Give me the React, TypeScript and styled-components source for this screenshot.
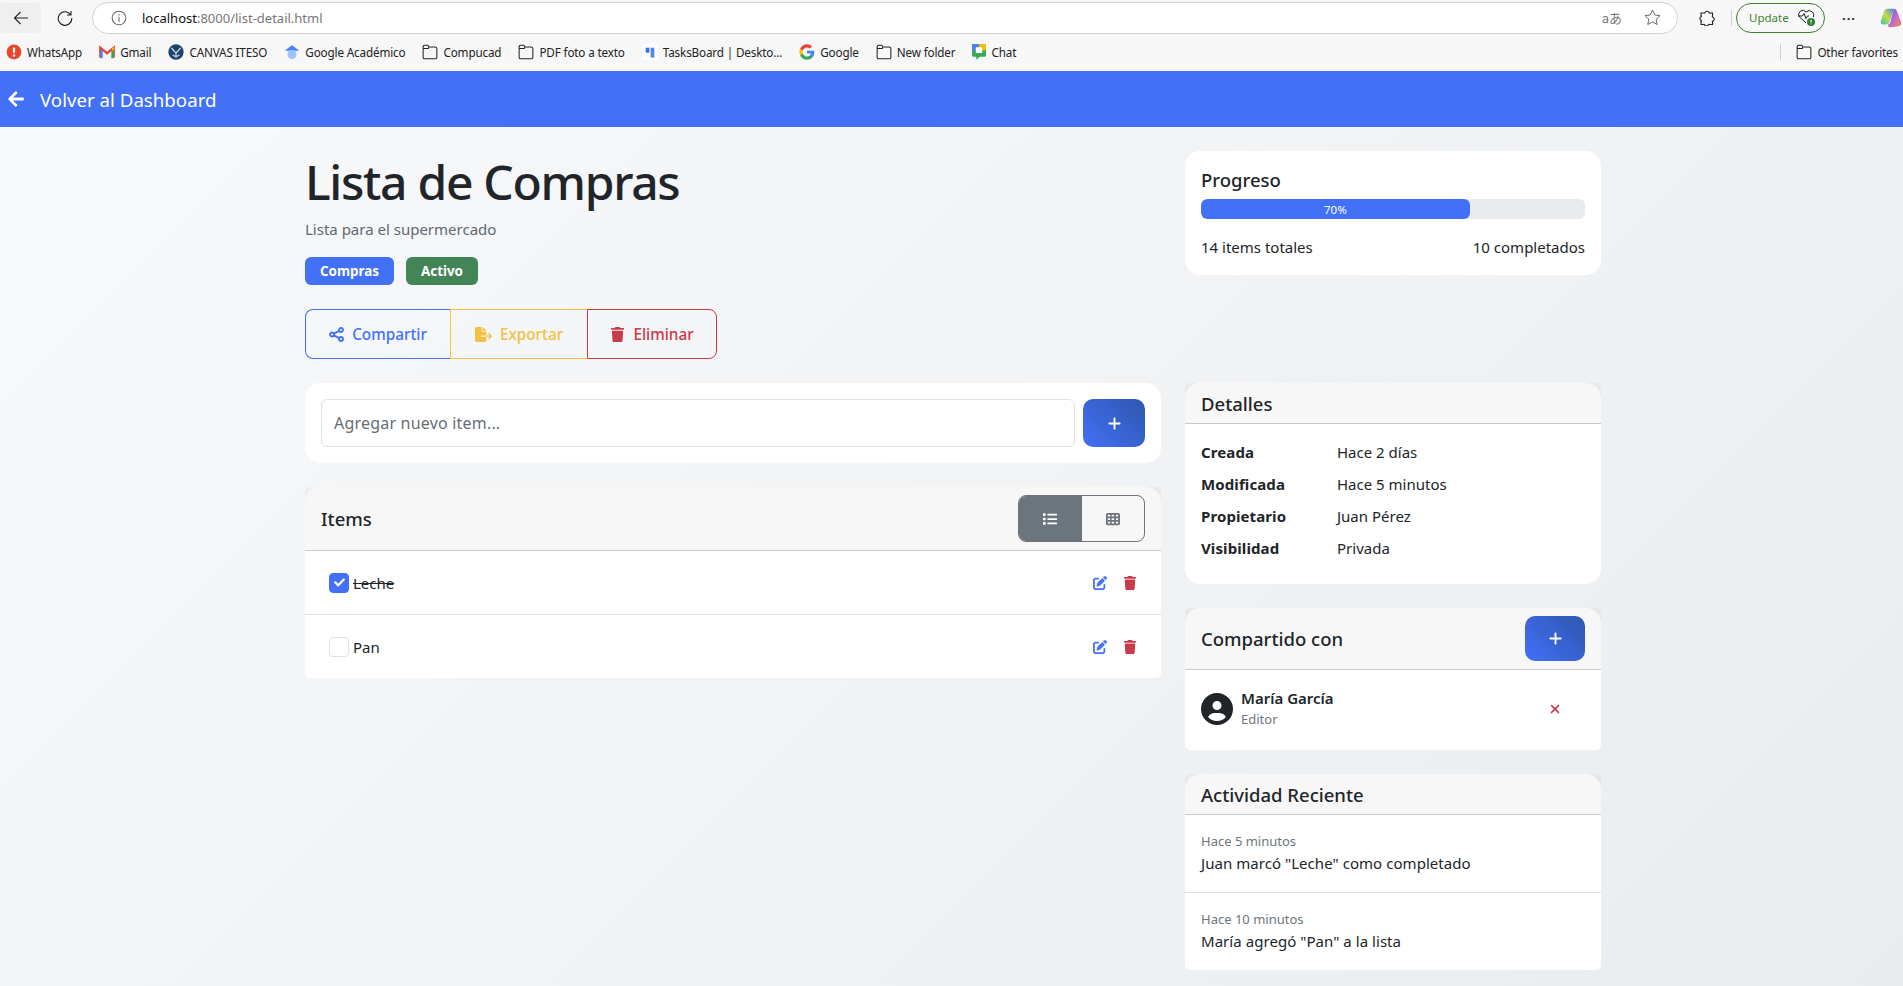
import React from "react"
import styled, { createGlobalStyle } from "styled-components"
import { FaArrowLeft, FaCheck, FaList } from "react-icons/fa"
import {
    FaCircleUser, FaFileExport, FaPenToSquare, FaPlus, FaTableCells, FaTrash, FaXmark,
} from "react-icons/fa6"

const FONT = `"Noto Sans", "Open Sans", "Liberation Sans", sans-serif`
const BLUE = "#4270f7"
const RED = "#c93a4a"
const YELLOW = "#f5bf42"

const GlobalStyle = createGlobalStyle`
    html, body {
        margin: 0;
        padding: 0;
        overflow: hidden;
    }
    * {
        box-sizing: border-box;
    }
    body {
        font-family: ${FONT};
        font-size: 15px;
        color: #212529;
    }
`

const Shell = styled.div`
    display: flex;
    flex-direction: column;
    height: 986px;
    overflow: hidden;
`

const Toolbar = styled.div`
    display: flex;
    align-items: center;
    height: 35px;
    background: #f7f7f7;
    flex: none;
`

const BackButton = styled.div`
    display: flex;
    align-items: center;
    justify-content: center;
    width: 41px;
    height: 30px;
    border-radius: 4px;
    background: #efefef;
`

const ReloadButton = styled.div`
    display: flex;
    align-items: center;
    justify-content: center;
    width: 30px;
    margin-left: 9px;
`

const AddressBar = styled.div`
    display: flex;
    align-items: center;
    width: 1586px;
    height: 32px;
    margin-left: 12px;
    padding: 0 16px 0 18px;
    background: #fff;
    border: 1px solid #d2d2d2;
    border-radius: 16px;
`

const UrlText = styled.span`
    margin-left: 15px;
    font-size: 13px;
    color: #111;
`

const UrlMuted = styled.span`
    color: #777;
`

const AddressActions = styled.div`
    display: flex;
    align-items: center;
    gap: 22px;
    margin-left: auto;
    color: #666;
`

const TranslateGlyph = styled.span`
    font-size: 13px;
    color: #777;
    font-family: "Noto Sans CJK JP", ${FONT};
`

const ToolIcon = styled.div`
    display: flex;
    justify-content: center;
    width: 24px;
    margin-left: 17px;
`

const ToolDivider = styled.div`
    width: 1px;
    height: 16px;
    margin: 0 4px 0 12px;
    background: #d0d0d0;
`

const UpdatePill = styled.div`
    display: flex;
    align-items: center;
    justify-content: space-between;
    width: 89px;
    height: 30px;
    padding: 0 8px 0 12px;
    border: 1px solid #3f7f2e;
    border-radius: 15px;
    font-size: 11.5px;
    color: #3f7f2e;
`

const MoreDots = styled.div`
    width: 30px;
    margin-left: 9px;
    text-align: center;
    font-size: 13px;
    font-weight: 700;
    letter-spacing: 1px;
    color: #222;
`

const CopilotSlot = styled.div`
    display: flex;
    margin-left: 16px;
`

const BookmarksBar = styled.div`
    display: flex;
    align-items: center;
    height: 36px;
    padding: 0 5px 2px 6px;
    background: #f7f7f7;
    flex: none;
`

const Bookmark = styled.div<{ $end?: boolean }>`
    display: flex;
    align-items: center;
    gap: 5px;
    margin-right: ${p => (p.$end ? 0 : 17)}px;
    font-size: 11.7px;
    letter-spacing: -0.15px;
    color: #222;
    white-space: nowrap;
`

const BookmarkDivider = styled.div`
    width: 1px;
    height: 16px;
    margin-left: auto;
    margin-right: 15px;
    background: #cfcfcf;
`

const Navbar = styled.nav`
    display: flex;
    align-items: center;
    gap: 15px;
    height: 56px;
    padding: 0 7px;
    background: ${BLUE};
    color: #fff;
    font-size: 18.7px;
    flex: none;
`

const Page = styled.main`
    flex: 1;
    min-height: 0;
    background: linear-gradient(135deg, #f8f9fa 0%, #e9ecef 100%) 0 0 / 100% 898px repeat;
`

const Container = styled.div`
    display: grid;
    grid-template-columns: 856px 416px;
    column-gap: 24px;
    width: 1296px;
    margin-left: 305px;
    padding-top: 24px;
`

const Column = styled.div`
    display: flex;
    flex-direction: column;
`

const Title = styled.h1`
    margin: 0;
    height: 62px;
    font-size: 48px;
    line-height: 62px;
    font-weight: 500;
    letter-spacing: -1.3px;
`

const Subtitle = styled.p`
    margin: 4px 0 0;
    line-height: 24px;
    font-size: 15px;
    color: #5f6872;
`

const BadgeRow = styled.div`
    display: flex;
    gap: 12px;
    margin-top: 16px;
`

const Badge = styled.span<{ $bg: string }>`
    display: flex;
    align-items: center;
    height: 28px;
    padding: 0 15px;
    border-radius: 6px;
    background: ${p => p.$bg};
    color: #fff;
    font-size: 13.4px;
    font-weight: 700;
`

const ButtonGroup = styled.div`
    display: flex;
    margin-top: 24px;
`

const OutlineButton = styled.button<{ $color: string; $width: number; $left?: boolean; $right?: boolean }>`
    display: flex;
    align-items: center;
    justify-content: center;
    gap: 8px;
    width: ${p => p.$width}px;
    height: 50px;
    padding: 0;
    background: transparent;
    border: 1px solid ${p => p.$color};
    border-right-width: ${p => (p.$right ? 1 : 0)}px;
    border-radius: ${p => (p.$left ? "8px 0 0 8px" : p.$right ? "0 8px 8px 0" : "0")};
    color: ${p => p.$color};
    font-family: ${FONT};
    font-size: 15.3px;
    font-weight: 500;
`

const Card = styled.section<{ $mt?: number }>`
    margin-top: ${p => p.$mt ?? 24}px;
    background: #fff;
    border-radius: 15px;
`

const AddForm = styled.div`
    display: flex;
    gap: 8px;
    padding: 16px;
`

const ItemInput = styled.input`
    flex: 1;
    height: 48px;
    padding: 0 12px;
    border: 1px solid #dee2e6;
    border-radius: 6px;
    background: #fff;
    font-family: ${FONT};
    font-size: 16px;
    letter-spacing: 0.2px;
    &::placeholder {
        color: #666d75;
        opacity: 1;
    }
`

const GradientButton = styled.button<{ $width: number; $height: number }>`
    display: flex;
    align-items: center;
    justify-content: center;
    width: ${p => p.$width}px;
    height: ${p => p.$height}px;
    padding: 0;
    border: none;
    border-radius: 10px;
    background: linear-gradient(45deg, #4270f7, #2f56ae);
    color: #fff;
    font-size: 15px;
`

const CardHeader = styled.header<{ $height: number }>`
    display: flex;
    align-items: center;
    justify-content: space-between;
    height: ${p => p.$height}px;
    padding: 0 16px;
    background: rgba(0, 0, 0, 0.03);
    border-bottom: 1px solid #c9cacb;
    border-radius: 5px 5px 0 0;
`

const CardTitle = styled.h5`
    margin: 0;
    padding-top: 1px;
    font-size: 18.5px;
    line-height: 24px;
    font-weight: 500;
`

const ViewToggle = styled.div`
    display: flex;
    width: 127px;
    height: 47px;
    border: 1px solid #6c757d;
    border-radius: 8px;
    overflow: hidden;
`

const ToggleSide = styled.div<{ $active?: boolean }>`
    display: flex;
    align-items: center;
    justify-content: center;
    width: ${p => (p.$active ? 64 : 63)}px;
    background: ${p => (p.$active ? "#6c757d" : "transparent")};
    color: ${p => (p.$active ? "#fff" : "#6c757d")};
    font-size: 14px;
`

const ItemRow = styled.div<{ $last?: boolean }>`
    display: flex;
    align-items: center;
    height: ${p => (p.$last ? 63 : 64)}px;
    padding: 0 24px;
    background: #fff;
    border-bottom: ${p => (p.$last ? "none" : "1px solid #dee2e6")};
    border-radius: ${p => (p.$last ? "0 0 5px 5px" : "0")};
`

const CheckBox = styled.span<{ $checked?: boolean }>`
    display: flex;
    align-items: center;
    justify-content: center;
    width: 20px;
    height: 20px;
    border-radius: 4px;
    border: 1px solid ${p => (p.$checked ? BLUE : "#dee2e6")};
    background: ${p => (p.$checked ? BLUE : "#fff")};
    color: #fff;
    font-size: 11px;
`

const ItemText = styled.span<{ $done?: boolean }>`
    margin-left: 4px;
    font-size: 15px;
    text-decoration: ${p => (p.$done ? "line-through" : "none")};
`

const RowActions = styled.div`
    display: flex;
    gap: 16px;
    margin-left: auto;
    font-size: 14px;
`

const ActionIcon = styled.span<{ $color: string }>`
    display: flex;
    color: ${p => p.$color};
`

const ProgressBody = styled.div`
    padding: 16px;
    height: 124px;
`

const ProgressTrack = styled.div`
    height: 20px;
    margin-top: 7px;
    border-radius: 6px;
    background: #e9ecef;
    overflow: hidden;
`

const ProgressFill = styled.div`
    display: flex;
    align-items: center;
    justify-content: center;
    height: 100%;
    border-radius: 6px;
    background: ${BLUE};
    color: #fff;
    font-size: 11.5px;
`

const ProgressStats = styled.div`
    display: flex;
    justify-content: space-between;
    margin-top: 16px;
    font-size: 15px;
    line-height: 24px;
`

const DetailList = styled.dl`
    display: grid;
    grid-template-columns: 136px 1fr;
    grid-auto-rows: 32px;
    align-items: center;
    margin: 0;
    padding: 12px 16px 20px;
    font-size: 15px;
`

const DetailLabel = styled.dt`
    font-weight: 700;
    letter-spacing: 0.1px;
`

const DetailValue = styled.dd`
    margin: 0;
`

const ShareRow = styled.div`
    display: flex;
    align-items: center;
    height: 80px;
    padding: 0 16px 3px;
    background: #fff;
    border-radius: 0 0 5px 5px;
`

const Avatar = styled.span`
    display: flex;
    font-size: 32px;
    color: #212529;
`

const ShareInfo = styled.div`
    display: flex;
    flex-direction: column;
    margin-left: 8px;
`

const ShareName = styled.span`
    font-size: 15px;
    line-height: 22px;
    font-weight: 600;
`

const ShareRole = styled.span`
    font-size: 13px;
    line-height: 21px;
    color: #6c757d;
`

const RemoveIcon = styled.span`
    display: flex;
    margin-left: auto;
    margin-right: 23px;
    color: ${RED};
    font-size: 14px;
`

const ActivityRow = styled.div<{ $last?: boolean }>`
    height: ${p => (p.$last ? 77 : 78)}px;
    padding: 16px 16px 0;
    background: #fff;
    border-bottom: ${p => (p.$last ? "none" : "1px solid #dee2e6")};
    border-radius: ${p => (p.$last ? "0 0 5px 5px" : "0")};
`

const ActivityTime = styled.div`
    font-size: 13px;
    line-height: 21px;
    color: #6c757d;
`

const ActivityText = styled.div`
    margin-top: -1px;
    font-size: 15px;
    letter-spacing: 0.05px;
    line-height: 24px;
`

const ShareIcon = () => (
    <svg width="15" height="15" viewBox="0 0 15 15" fill="none" stroke="currentColor" strokeWidth="1.800">
        <circle cx="3" cy="7.500" r="2" />
        <circle cx="12" cy="3" r="2" />
        <circle cx="12" cy="12" r="2" />
        <path d="M4.800 6.600L10.200 3.900M4.800 8.400L10.200 11.100" />
    </svg>
)

const FolderIcon = () => (
    <svg width="16" height="16" viewBox="0 0 14 14" fill="none" stroke="#222" strokeWidth="0.9">
        <path d="M1 3V11.5Q1 13 2.5 13H11.5Q13 13 13 11.5V4Q13 2.7 11.5 2.7H6L5 1H2.3Q1 1 1 3ZM1 4H5.5L6 2.7" />
    </svg>
)

const WhatsAppFav = () => (
    <svg width="16" height="16" viewBox="0 0 13 13">
        <circle cx="6.5" cy="6.5" r="6" fill="#e8472b" />
        <rect x="5.6" y="2.8" width="1.8" height="4.6" rx=".6" fill="#fff" />
        <circle cx="6.5" cy="9.4" r="1" fill="#fff" />
    </svg>
)

const GmailFav = () => (
    <svg width="16" height="16" viewBox="0 0 13 13" fill="none">
        <path d="M1 11V3L6.5 7.5L12 3V11" stroke="#ea4335" strokeWidth="1.8" />
        <path d="M1 4V11.5H3V5.5Z" fill="#4285f4" />
        <path d="M12 4V11.5H10V5.5Z" fill="#34a853" />
        <path d="M10.5 3.6L12 2.4L13 3.5L10.5 5.6Z" fill="#fbbc04" />
    </svg>
)

const CanvasFav = () => (
    <svg width="16" height="16" viewBox="0 0 14 14" fill="none">
        <circle cx="7" cy="7" r="6.7" fill="#1f4468" />
        <path d="M3 3.5L7 8L11 3.5M7 8V12M4 9.5Q7 12 10 9.5" stroke="#cfe0ee" strokeWidth="1" />
    </svg>
)

const ScholarFav = () => (
    <svg width="16" height="16" viewBox="0 0 13 13">
        <path d="M6.5 1L12.5 5.5H.5Z" fill="#4285f4" />
        <circle cx="6.5" cy="8.5" r="3.7" fill="#a0c3ff" />
    </svg>
)

const TasksFav = () => (
    <svg width="16" height="16" viewBox="0 0 13 13">
        <rect width="13" height="13" fill="#fff" />
        <rect x="3" y="3" width="3" height="4" fill="#3a6fd8" />
        <rect x="7" y="3" width="3" height="8" fill="#4d86f0" />
    </svg>
)

const GoogleFav = () => (
    <svg width="16" height="16" viewBox="0 0 24 24">
        <path fill="#4285F4" d="M23 12.3c0-.8-.1-1.600-.2-2.300H12v4.400h6.200c-.3 1.400-1.100 2.600-2.300 3.400v2.800h3.700C21.700 18.600 23 15.700 23 12.300z" />
        <path fill="#34A853" d="M12 23.500c3.100 0 5.700-1 7.600-2.800l-3.700-2.900c-1 .7-2.300 1.100-3.900 1.100-3 0-5.500-2-6.400-4.700H1.800v2.900C3.700 20.900 7.600 23.500 12 23.500z" />
        <path fill="#FBBC05" d="M5.600 14.200c-.5-1.400-.5-3 0-4.400V6.900H1.800c-1.600 3.200-1.600 7 0 10.200z" />
        <path fill="#EA4335" d="M12 5.100c1.700 0 3.200.6 4.400 1.700l3.300-3.300C17.700 1.600 15.100.5 12 .5 7.600.5 3.700 3.100 1.800 6.900l3.800 2.900C6.500 7.100 9 5.100 12 5.100z" />
    </svg>
)

const ChatFav = () => (
    <svg width="14" height="16" viewBox="0 0 13 15">
        <rect x="0" y="0" width="13" height="12" rx="1.500" fill="#34a853" />
        <path d="M4 11H8L4 15Z" fill="#34a853" />
        <rect x="0" y="0" width="6.500" height="6" fill="#4285f4" />
        <rect x="6.500" y="0" width="6.500" height="6" rx="1" fill="#fbbc04" />
        <rect x="3.500" y="3" width="6" height="5.500" fill="#fff" />
    </svg>
)

const CopilotIcon = () => (
    <svg width="22" height="22" viewBox="0 0 24 24">
        <defs>
            <linearGradient id="cpA" x1="0" y1="1" x2="1" y2="0">
                <stop offset="0" stopColor="#37c9a0" />
                <stop offset=".5" stopColor="#c9d94a" />
                <stop offset="1" stopColor="#3f86e8" />
            </linearGradient>
            <linearGradient id="cpB" x1="0" y1="0" x2="1" y2="1">
                <stop offset="0" stopColor="#4a5ae0" />
                <stop offset=".55" stopColor="#c66bd0" />
                <stop offset="1" stopColor="#f08a3c" />
            </linearGradient>
        </defs>
        <path d="M9 2H15L11 15Q10 19 6 19H4Q0 19 1 15L4 6Q5 2 9 2Z" fill="url(#cpA)" />
        <path d="M15 2Q18 2 19 6L23 16Q24 20 20 21L12 22Q8 22 9 19Q11 19 12 14Z" fill="url(#cpB)" />
    </svg>
)

const bookmarks: { label: string; icon: React.ReactNode }[] = [
    { label: "WhatsApp", icon: <WhatsAppFav /> },
    { label: "Gmail", icon: <GmailFav /> },
    { label: "CANVAS ITESO", icon: <CanvasFav /> },
    { label: "Google Académico", icon: <ScholarFav /> },
    { label: "Compucad", icon: <FolderIcon /> },
    { label: "PDF foto a texto", icon: <FolderIcon /> },
    { label: "TasksBoard | Deskto...", icon: <TasksFav /> },
    { label: "Google", icon: <GoogleFav /> },
    { label: "New folder", icon: <FolderIcon /> },
    { label: "Chat", icon: <ChatFav /> },
]

const BrowserChrome = () => (
    <>
        <Toolbar>
            <BackButton>
                <svg width="16" height="16" viewBox="0 0 16 16" fill="none" stroke="#222" strokeWidth="1.100">
                    <path d="M15 8H1.500M7.500 2L1.500 8L7.500 14" />
                </svg>
            </BackButton>
            <ReloadButton>
                <svg width="16" height="16" viewBox="0 0 16 16" fill="none" stroke="#222" strokeWidth="1.100">
                    <path d="M13.500 4.500A6.800 6.800 0 1 0 14.800 8M14 1V5H10" />
                </svg>
            </ReloadButton>
            <AddressBar>
                <svg width="16" height="16" viewBox="0 0 14 14" fill="none" stroke="#666" strokeWidth="0.9">
                    <circle cx="7" cy="7" r="6" />
                    <path d="M7 6V10.500M7 3.600V4.800" />
                </svg>
                <UrlText>localhost<UrlMuted>:8000/list-detail.html</UrlMuted></UrlText>
                <AddressActions>
                    <TranslateGlyph>aあ</TranslateGlyph>
                    <svg width="17" height="17" viewBox="0 0 17 17" fill="none" stroke="#666" strokeWidth="1">
                        <path d="M8.500 1L10.800 6L16 6.600L12.200 10.200L13.200 15.500L8.500 12.900L3.800 15.500L4.800 10.200L1 6.600L6.200 6Z" />
                    </svg>
                </AddressActions>
            </AddressBar>
            <ToolIcon>
                <svg width="16" height="16" viewBox="0 0 16 16" fill="none" stroke="#222" strokeWidth="1.100">
                    <path d="M6 2.500A2.200 2.200 0 0 1 10 2.500Q10.300 3.300 11.500 3H13.500V6Q13 7 14 7.300A2 2 0 0 1 14 11Q13 11.200 13.500 12V14.500H10.500Q10 14 9.500 14.800A2.200 2.200 0 0 1 5.500 14.800Q5 14 4.500 14.500H2V11.500Q3 11 2.200 10.500A2.200 2.200 0 0 1 2.200 6.500Q3 6 2 5.500V3H5Q5.700 3.300 6 2.500Z" />
                </svg>
            </ToolIcon>
            <ToolDivider />
            <UpdatePill>
                Update
                <svg width="19" height="19" viewBox="0 0 19 19" fill="none">
                    <path d="M9 15L2.500 9A4 4 0 0 1 9 4Q12 1 15.500 4Q17.500 6 16.500 9" stroke="#222" strokeWidth="1" />
                    <path d="M1 8H5.500L7 5.500L9 10.500L10.500 8H12" stroke="#222" strokeWidth="1" />
                    <circle cx="14" cy="14" r="4" fill="#2f7d32" />
                    <path d="M14 11.800V14.500M14 15.500V16.300" stroke="#fff" strokeWidth="1.200" />
                </svg>
            </UpdatePill>
            <MoreDots>···</MoreDots>
            <CopilotSlot><CopilotIcon /></CopilotSlot>
        </Toolbar>
        <BookmarksBar>
            {bookmarks.map(b => (
                <Bookmark key={b.label}>{b.icon}{b.label}</Bookmark>
            ))}
            <BookmarkDivider />
            <Bookmark $end><FolderIcon />Other favorites</Bookmark>
        </BookmarksBar>
    </>
)

const items = [
    { name: "Leche", done: true },
    { name: "Pan", done: false },
]

const details = [
    ["Creada", "Hace 2 días"],
    ["Modificada", "Hace 5 minutos"],
    ["Propietario", "Juan Pérez"],
    ["Visibilidad", "Privada"],
]

const activity = [
    { time: "Hace 5 minutos", text: 'Juan marcó "Leche" como completado' },
    { time: "Hace 10 minutos", text: 'María agregó "Pan" a la lista' },
]

export default function App() {
    return (
        <Shell>
            <GlobalStyle />
            <BrowserChrome />
            <Navbar><FaArrowLeft size={18} />Volver al Dashboard</Navbar>
            <Page>
                <Container>
                    <Column>
                        <Title>Lista de Compras</Title>
                        <Subtitle>Lista para el supermercado</Subtitle>
                        <BadgeRow>
                            <Badge $bg={BLUE}>Compras</Badge>
                            <Badge $bg="#448557">Activo</Badge>
                        </BadgeRow>
                        <ButtonGroup>
                            <OutlineButton $color={BLUE} $width={145} $left><ShareIcon />Compartir</OutlineButton>
                            <OutlineButton $color={YELLOW} $width={137}><FaFileExport size={17} />Exportar</OutlineButton>
                            <OutlineButton $color={RED} $width={130} $right><FaTrash size={15} />Eliminar</OutlineButton>
                        </ButtonGroup>
                        <Card>
                            <AddForm>
                                <ItemInput placeholder="Agregar nuevo item..." />
                                <GradientButton $width={62} $height={48}><FaPlus /></GradientButton>
                            </AddForm>
                        </Card>
                        <Card>
                            <CardHeader $height={64}>
                                <CardTitle>Items</CardTitle>
                                <ViewToggle>
                                    <ToggleSide $active><FaList /></ToggleSide>
                                    <ToggleSide><FaTableCells /></ToggleSide>
                                </ViewToggle>
                            </CardHeader>
                            {items.map((item, i) => (
                                <ItemRow key={item.name} $last={i === items.length - 1}>
                                    <CheckBox $checked={item.done}>{item.done && <FaCheck />}</CheckBox>
                                    <ItemText $done={item.done}>{item.name}</ItemText>
                                    <RowActions>
                                        <ActionIcon $color={BLUE}><FaPenToSquare /></ActionIcon>
                                        <ActionIcon $color={RED}><FaTrash /></ActionIcon>
                                    </RowActions>
                                </ItemRow>
                            ))}
                        </Card>
                    </Column>
                    <Column>
                        <Card $mt={0}>
                            <ProgressBody>
                                <CardTitle>Progreso</CardTitle>
                                <ProgressTrack>
                                    <ProgressFill style={{ width: "70%" }}>70%</ProgressFill>
                                </ProgressTrack>
                                <ProgressStats>
                                    <span>14 items totales</span>
                                    <span>10 completados</span>
                                </ProgressStats>
                            </ProgressBody>
                        </Card>
                        <Card $mt={108}>
                            <CardHeader $height={41}><CardTitle>Detalles</CardTitle></CardHeader>
                            <DetailList>
                                {details.map(([label, value]) => (
                                    <React.Fragment key={label}>
                                        <DetailLabel>{label}</DetailLabel>
                                        <DetailValue>{value}</DetailValue>
                                    </React.Fragment>
                                ))}
                            </DetailList>
                        </Card>
                        <Card>
                            <CardHeader $height={62}>
                                <CardTitle>Compartido con</CardTitle>
                                <GradientButton $width={60} $height={45}><FaPlus /></GradientButton>
                            </CardHeader>
                            <ShareRow>
                                <Avatar><FaCircleUser /></Avatar>
                                <ShareInfo>
                                    <ShareName>María García</ShareName>
                                    <ShareRole>Editor</ShareRole>
                                </ShareInfo>
                                <RemoveIcon><FaXmark /></RemoveIcon>
                            </ShareRow>
                        </Card>
                        <Card>
                            <CardHeader $height={41}><CardTitle>Actividad Reciente</CardTitle></CardHeader>
                            {activity.map((a, i) => (
                                <ActivityRow key={a.time} $last={i === activity.length - 1}>
                                    <ActivityTime>{a.time}</ActivityTime>
                                    <ActivityText>{a.text}</ActivityText>
                                </ActivityRow>
                            ))}
                        </Card>
                    </Column>
                </Container>
            </Page>
        </Shell>
    )
}
